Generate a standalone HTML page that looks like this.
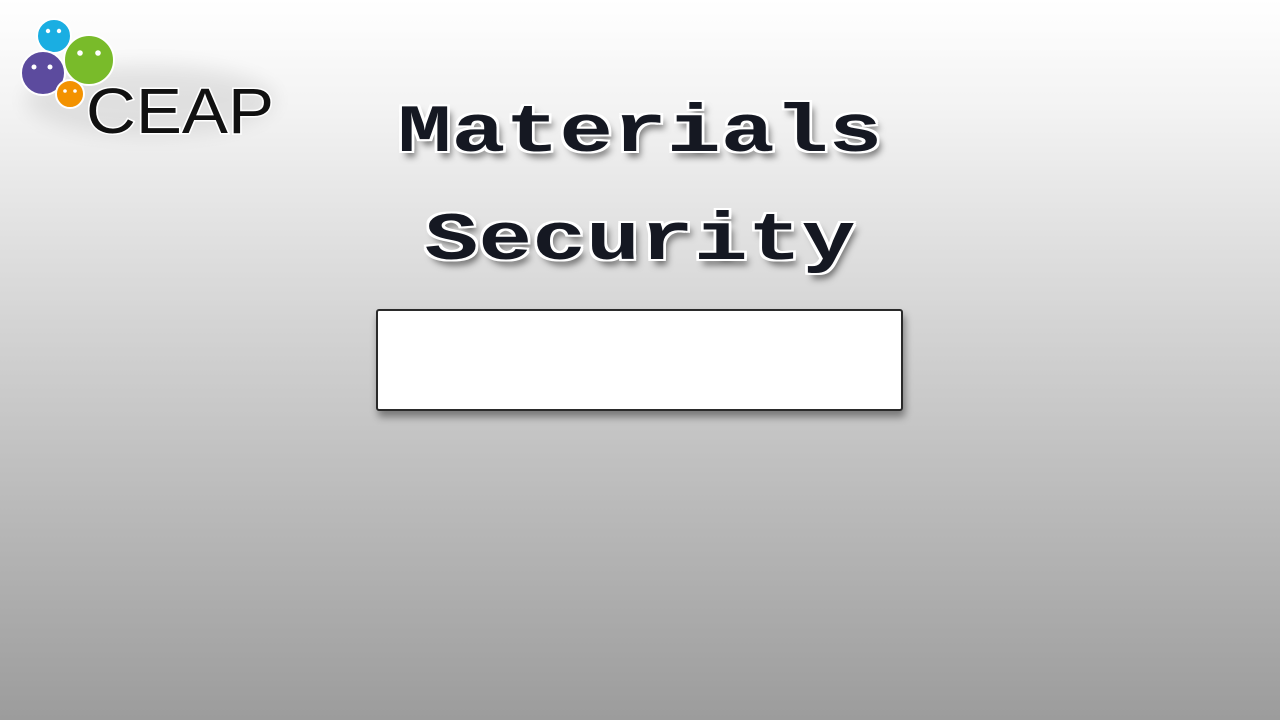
<!DOCTYPE html>
<html><head><style>
html,body{margin:0;padding:0}
body{width:1280px;height:720px;overflow:hidden;position:relative;background:linear-gradient(#ffffff 0%,#f3f3f3 15%,#d4d4d4 45%,#b5b5b5 75%,#9c9c9c 100%);}
.t{position:absolute;left:0;width:1280px;text-align:center;font-family:"Liberation Mono",monospace;font-weight:bold;font-size:68px;transform:scaleX(1.32);transform-origin:640px 0;color:#151822;
text-shadow:2px 0 0 #fff,-2px 0 0 #fff,0 2px 0 #fff,0 -2px 0 #fff,2px 2px 0 #fff,-2px -2px 0 #fff,2px -2px 0 #fff,-2px 2px 0 #fff,3px 6px 6px rgba(0,0,0,.5);line-height:100px}
.box{position:absolute;left:376px;top:309px;width:523px;height:98px;background:#fff;border:2px solid #2a2a2a;border-radius:3px;box-shadow:2px 6px 8px rgba(0,0,0,.4)}
</style></head><body>
<svg width="300" height="160" style="position:absolute;left:0;top:0">
<defs><filter id="s" x="-50%" y="-50%" width="200%" height="200%"><feGaussianBlur stdDeviation="10"/></filter></defs>
<ellipse cx="150" cy="100" rx="125" ry="35" fill="#000" opacity=".08" filter="url(#s)"/>
<circle cx="54" cy="36" r="17" fill="#1aaee2" stroke="#fff" stroke-width="2"/>
<circle cx="89" cy="60" r="25" fill="#79bb2a" stroke="#fff" stroke-width="2"/>
<circle cx="43" cy="73" r="22" fill="#5c4b9e" stroke="#fff" stroke-width="2"/>
<circle cx="70" cy="94" r="14" fill="#f39200" stroke="#fff" stroke-width="2"/>
<g fill="#fff"><circle cx="48" cy="31" r="2.2"/><circle cx="59" cy="31" r="2.2"/><circle cx="80" cy="53" r="2.8"/><circle cx="98" cy="53" r="2.8"/><circle cx="34" cy="67" r="2.5"/><circle cx="50" cy="67" r="2.5"/><circle cx="65" cy="91" r="1.8"/><circle cx="75" cy="91" r="1.8"/></g>
<text x="86" y="133" font-family="Liberation Sans,sans-serif" font-size="64" fill="#111" stroke="#fff" stroke-width="3" paint-order="stroke" textLength="188" lengthAdjust="spacingAndGlyphs">CEAP</text>
</svg>
<div class="t" style="top:84px">Materials</div>
<div class="t" style="top:192px">Security</div>
<div class="box"></div>
</body></html>
